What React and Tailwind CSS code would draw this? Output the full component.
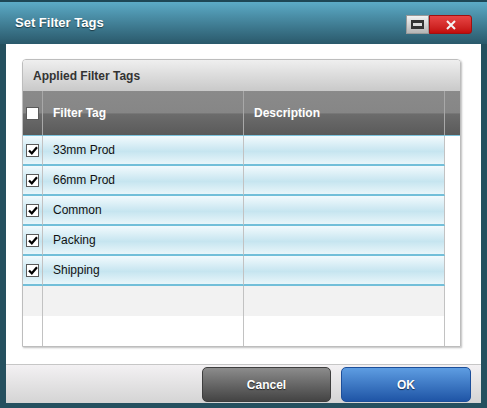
const ROWS = ['33mm Prod', '66mm Prod', 'Common', 'Packing', 'Shipping'];

function Check({ checked }) {
  return (
    <span className="flex h-[13px] w-[13px] items-center justify-center border border-[#5a5a5a] bg-white">
      {checked && (
        <svg width="10" height="9" viewBox="0 0 10 9">
          <path d="M1 4.5 L3.8 7.3 L9 1.2" fill="none" stroke="#000" strokeWidth="2.2" />
        </svg>
      )}
    </span>
  );
}

export default function App() {
  return (
    <div className="flex h-[408px] w-[487px] flex-col bg-[#25505f] pb-[5px] font-['Liberation_Sans',Arial,sans-serif]">
      <div className="relative h-[44px] shrink-0 border-t-2 border-[#1e4756] bg-gradient-to-b from-[#5cabc7] to-[#2a596b]">
        <div className="pl-[15px] pt-[11px] text-[13px] font-bold text-white [text-shadow:0_1px_1px_rgba(0,0,0,0.5)]">
          Set Filter Tags
        </div>
        <div className="absolute right-[15px] top-[13px] flex h-[19px]">
          <div className="flex w-[23px] items-center justify-center border border-[#9a9a9a] bg-gradient-to-b from-[#f2f2f2] to-[#b5b5b5]">
            <div className="flex h-[9px] w-[13px] items-center justify-center bg-[#333]">
              <div className="h-[3px] w-[9px] bg-[#ddd]" />
            </div>
          </div>
          <div className="flex w-[43px] items-center justify-center rounded-r-[3px] border border-[#a01010] bg-gradient-to-b from-[#e84444] to-[#c20a0a]">
            <svg width="10" height="10" viewBox="0 0 10 10">
              <path d="M1 1 L9 9 M9 1 L1 9" stroke="#f4f4f4" strokeWidth="2" />
            </svg>
          </div>
        </div>
      </div>

      <div className="mx-[6px] flex flex-1 flex-col bg-white">
        <div className="flex-1 pl-[16px] pr-[20px] pt-[15px]">
          <div className="flex h-[288px] flex-col overflow-hidden rounded-t-[4px] border border-[#bdbdbd] shadow-[1px_1px_2px_rgba(0,0,0,0.25)]">
            <div className="flex h-[31px] shrink-0 items-center bg-gradient-to-b from-[#efefef] to-[#c9c9c9] pl-[10px] text-[12px] font-bold text-[#333]">
              Applied Filter Tags
            </div>
            <div className="grid h-[45px] shrink-0 grid-cols-[20px_201px_201px_1fr] border-b border-[#7cc3dc] bg-[linear-gradient(#8a8a8a_0%,#868686_50%,#6c6c6c_52%,#5a5a5a_100%)] text-[12px] font-bold text-white">
              <div className="flex items-center justify-center border-r border-[#a8a8a8]">
                <Check />
              </div>
              <div className="flex items-center border-r border-[#a8a8a8] pl-[10px]">Filter Tag</div>
              <div className="flex items-center border-r border-[#a8a8a8] pl-[10px]">Description</div>
              <div />
            </div>
            {ROWS.map((r) => (
              <div key={r} className="grid h-[30px] shrink-0 grid-cols-[20px_201px_201px_1fr] text-[12px] text-[#111]">
                <div className="flex items-center justify-center border-b-2 border-r border-b-[#72bfd9] border-r-[#c2c2c2] bg-[linear-gradient(#f2fafd,#c6e5f0_55%,#e9f6fa)]">
                  <Check checked />
                </div>
                <div className="flex items-center border-b-2 border-r border-b-[#72bfd9] border-r-[#c2c2c2] bg-[linear-gradient(#f2fafd,#c6e5f0_55%,#e9f6fa)] pl-[10px]">
                  {r}
                </div>
                <div className="border-b-2 border-r border-b-[#72bfd9] border-r-[#c2c2c2] bg-[linear-gradient(#f2fafd,#c6e5f0_55%,#e9f6fa)]" />
                <div className="bg-white" />
              </div>
            ))}
            <div className="grid h-[30px] shrink-0 grid-cols-[20px_201px_201px_1fr]">
              <div className="border-r border-[#c2c2c2] bg-[#f2f2f2]" />
              <div className="border-r border-[#c2c2c2] bg-[#f2f2f2]" />
              <div className="border-r border-[#c2c2c2] bg-[#f2f2f2]" />
              <div className="bg-white" />
            </div>
            <div className="grid flex-1 grid-cols-[20px_201px_201px_1fr]">
              <div className="border-r border-[#c2c2c2]" />
              <div className="border-r border-[#c2c2c2]" />
              <div className="border-r border-[#c2c2c2]" />
              <div />
            </div>
          </div>
        </div>

        <div className="flex h-[39px] shrink-0 justify-end gap-[10px] border-t border-[#c6c6c6] bg-gradient-to-b from-[#f3f1f3] to-[#d4d4d4] pr-[10px] pt-[2px]">
          <button className="h-[35px] w-[129px] rounded-[5px] border border-[#3e3e3e] bg-gradient-to-b from-[#8c8c8c] to-[#444] text-[12px] font-bold text-white [text-shadow:0_1px_1px_rgba(0,0,0,0.6)]">
            Cancel
          </button>
          <button className="h-[35px] w-[130px] rounded-[5px] border border-[#1d4f9a] bg-gradient-to-b from-[#5e9de2] to-[#1f55a6] text-[12px] font-bold text-white [text-shadow:0_1px_1px_rgba(0,0,0,0.6)]">
            OK
          </button>
        </div>
      </div>
    </div>
  );
}
